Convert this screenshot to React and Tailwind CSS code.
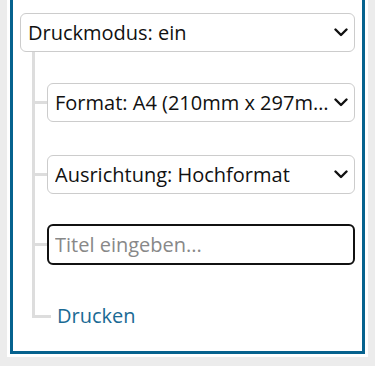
import React from "react";

const Chevron = () => (
  <svg width="14" height="9" viewBox="0 0 14 9" className="shrink-0">
    <polyline points="1.5,1.5 7,7 12.5,1.5" fill="none" stroke="#111" strokeWidth="2.4" strokeLinecap="round" strokeLinejoin="round" />
  </svg>
);

const Select = ({ label }) => (
  <div className="flex h-[39px] items-center justify-between gap-[3px] rounded-md border border-[#cccccc] bg-white pl-[7px] pr-[6px]">
    <span className="truncate">{label}</span>
    <Chevron />
  </div>
);

// one branch of the tree: vertical line on the left, elbow into the item
const Branch = ({ pt, last, lineTop, children }) => (
  <li className="relative pl-[27px]" style={{ paddingTop: pt }}>
    <span
      className="absolute left-[12px] top-0 w-[3px] bg-[#dddddd]"
      style={last ? { height: lineTop + 3 } : { bottom: 0 }}
    />
    <span className="absolute left-[12px] h-[3px] bg-[#dddddd]" style={{ top: lineTop, width: last ? 19 : 15 }} />
    {children}
  </li>
);

export default function App() {
  return (
    <div className="h-[366px] overflow-hidden bg-[#ececec] px-[7px] pb-[9px] text-[20px] text-[#111] [font-family:'Open_Sans',sans-serif]">
      <div className="h-full bg-white px-[3px] pb-[3px]">
        <div className="h-full border-[3px] border-t-0 border-[#06628e] px-[7px] pt-[13px]">
          <Select label="Druckmodus: ein" />
          <ul>
            <Branch pt={31} lineTop={31 + 18}>
              <Select label="Format: A4 (210mm x 297mm)" />
            </Branch>
            <Branch pt={33} lineTop={33 + 18}>
              <Select label="Ausrichtung: Hochformat" />
            </Branch>
            <Branch pt={30} lineTop={30 + 19}>
              <input
                type="text"
                placeholder="Titel eingeben..."
                className="h-[41px] w-full rounded-md border-2 border-[#111] px-[6px] outline-none placeholder:text-[#888]"
              />
            </Branch>
            <Branch pt={39} last lineTop={39 + 11}>
              <a href="#" className="ml-[4px] block pl-[6px] leading-[24px] text-[#1a6a94]">
                Drucken
              </a>
            </Branch>
          </ul>
        </div>
      </div>
    </div>
  );
}
